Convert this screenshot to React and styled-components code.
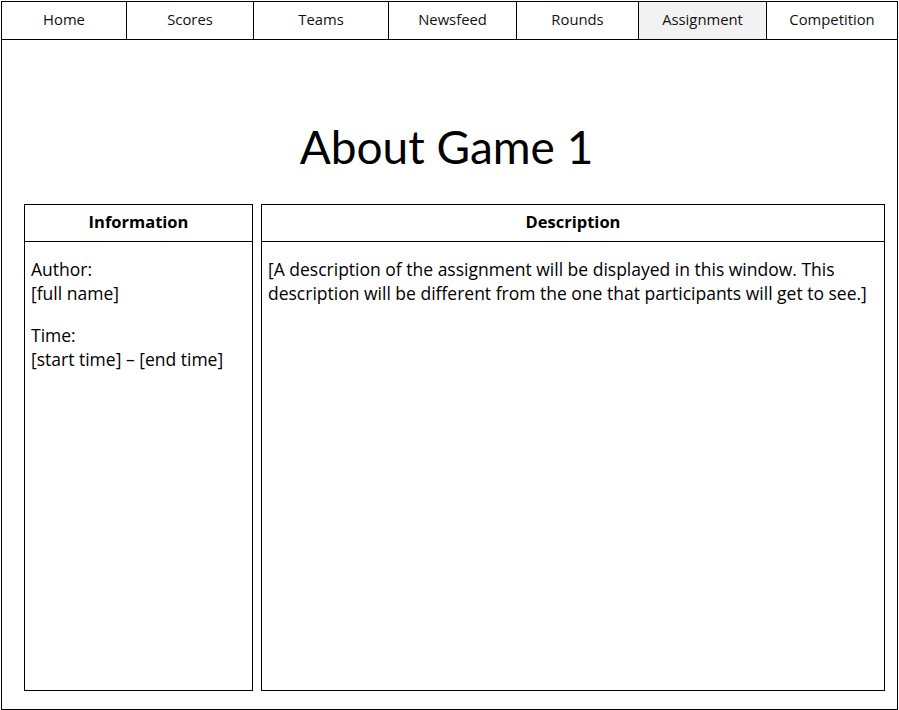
import styled, { createGlobalStyle } from "styled-components";

const GlobalStyle = createGlobalStyle`
  html, body {
    margin: 0;
    padding: 0;
    background: #fff;
  }
  body {
    font-family: "Open Sans", Lato, sans-serif;
    color: #000;
  }
`;

const navItems = [
  { label: "Home", width: 125 },
  { label: "Scores", width: 127 },
  { label: "Teams", width: 135 },
  { label: "Newsfeed", width: 128 },
  { label: "Rounds", width: 122 },
  { label: "Assignment", width: 128, active: true },
  { label: "Competition", width: 131 },
];

const App = () => {
  return (
    <>
      <GlobalStyle />
      <Frame>
        <Nav>
          {navItems.map((item) => (
            <NavItem key={item.label} $width={item.width} $active={item.active}>
              {item.label}
            </NavItem>
          ))}
        </Nav>
        <Main>
          <Title>About Game 1</Title>
          <Panels>
            <Panel $width={229}>
              <PanelHeader>Information</PanelHeader>
              <PanelBody>
                <Field>
                  Author:
                  <br />
                  [full name]
                </Field>
                <Field>
                  Time:
                  <br />
                  [start time] – [end time]
                </Field>
              </PanelBody>
            </Panel>
            <Panel $grow>
              <PanelHeader>Description</PanelHeader>
              <PanelBody>
                <Field>
                  [A description of the assignment will be displayed in this
                  window. This description will be different from the one that
                  participants will get to see.]
                </Field>
              </PanelBody>
            </Panel>
          </Panels>
        </Main>
      </Frame>
    </>
  );
};

export default App;

const Frame = styled.div`
  box-sizing: border-box;
  margin: 1px 0 0 1px;
  width: 897px;
  height: 709px;
  border: 1px solid #000;
  display: flex;
  flex-direction: column;
`;

const Nav = styled.nav`
  display: flex;
  height: 37px;
  border-bottom: 1px solid #000;
  flex-shrink: 0;
`;

const NavItem = styled.div`
  box-sizing: border-box;
  width: ${(p) => p.$width}px;
  display: flex;
  align-items: center;
  justify-content: center;
  padding-bottom: 4px;
  font-size: 14.8px;
  color: #111;
  background: ${(p) => (p.$active ? "#f2f2f2" : "#fff")};
  border-right: 1px solid #000;

  &:last-child {
    border-right: none;
    flex: 1;
  }
`;

const Main = styled.main`
  flex: 1;
  display: flex;
  flex-direction: column;
  padding: 0 12px 18px 22px;
  min-height: 0;
`;

const Title = styled.h1`
  margin: 0;
  height: 164px;
  box-sizing: border-box;
  padding: 82px 16px 0 0;
  text-align: center;
  font-family: Lato, "Open Sans", sans-serif;
  font-weight: 400;
  font-size: 46px;
  line-height: 50px;
`;

const Panels = styled.div`
  flex: 1;
  display: flex;
  gap: 8px;
  min-height: 0;
`;

const Panel = styled.section`
  box-sizing: border-box;
  width: ${(p) => (p.$width ? `${p.$width}px` : "auto")};
  flex: ${(p) => (p.$grow ? 1 : "none")};
  border: 1px solid #000;
  display: flex;
  flex-direction: column;
`;

const PanelHeader = styled.h2`
  margin: 0;
  height: 37px;
  padding-bottom: 3px;
  box-sizing: border-box;
  border-bottom: 1px solid #000;
  display: flex;
  align-items: center;
  justify-content: center;
  font-size: 16.5px;
  font-weight: 700;
`;

const PanelBody = styled.div`
  padding: 15px 6px;
  display: flex;
  flex-direction: column;
  gap: 18px;
`;

const Field = styled.p`
  margin: 0;
  font-size: 17.5px;
  line-height: 24px;
`;
